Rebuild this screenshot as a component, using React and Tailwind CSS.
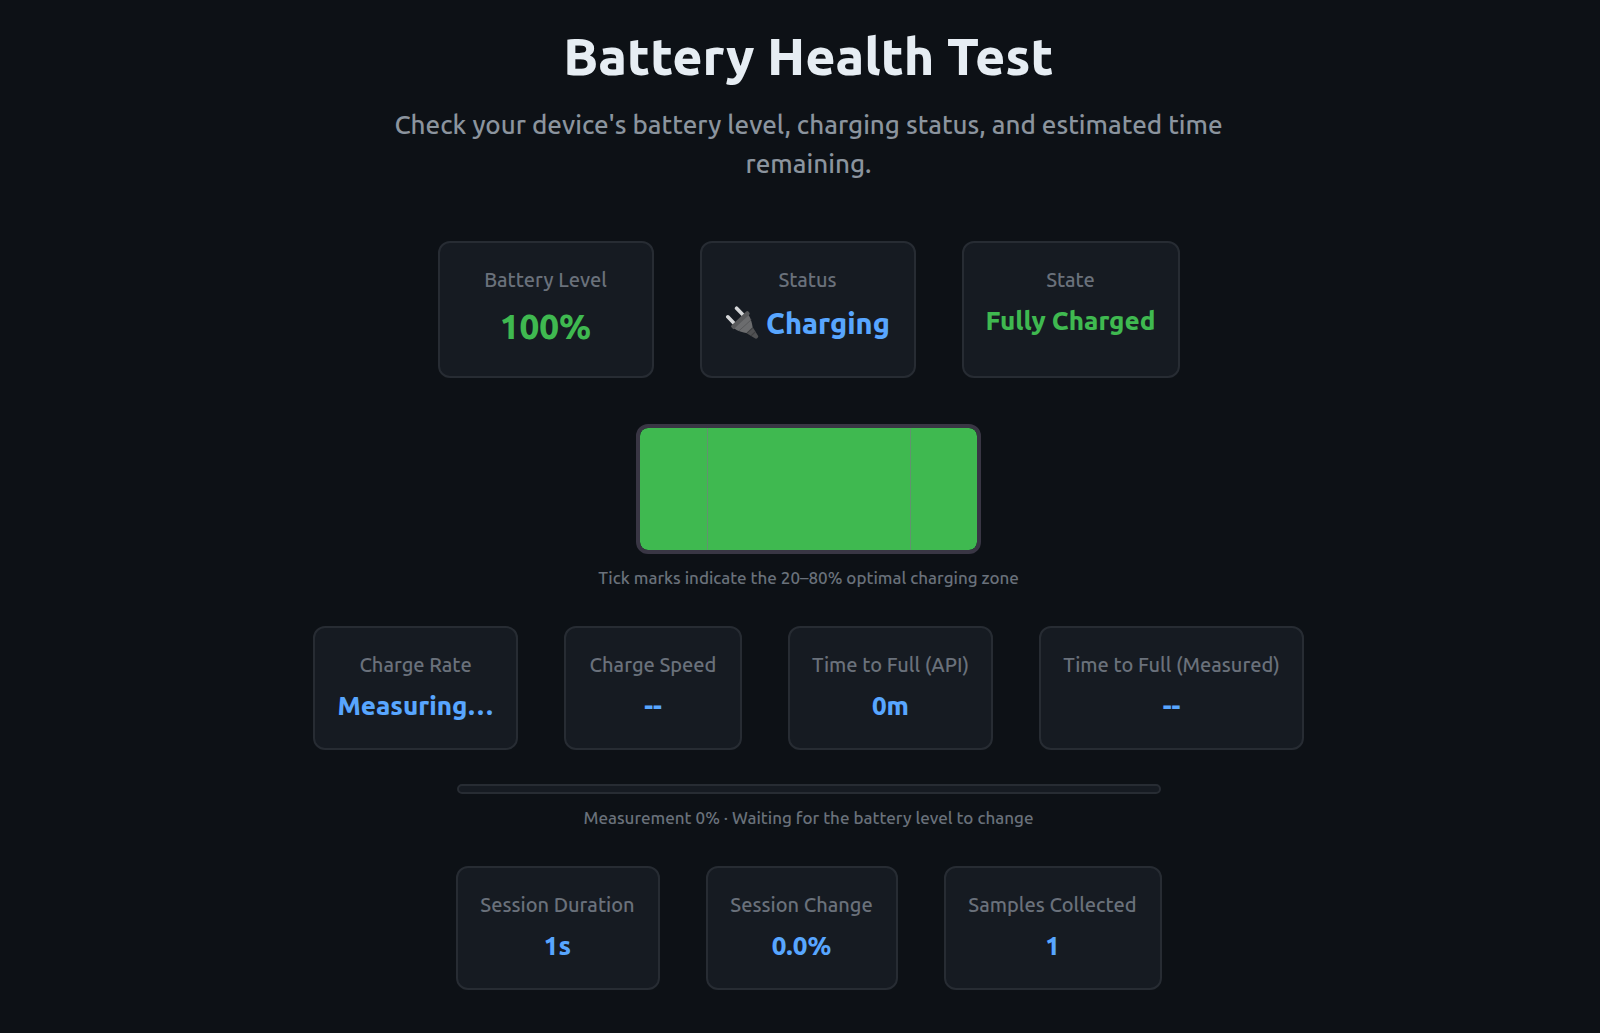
import clsx from 'clsx';

const levelStats = [
    { label: 'Battery Level', value: '100%', width: 'min-w-54', color: 'text-[#3fb950]', size: 'text-[35px] leading-[50px] mb-[3px]' },
    { label: 'Status', value: 'Charging', width: 'min-w-54', color: 'text-[#58a6ff]', size: 'text-[29px] leading-[44px]', plug: true },
    { label: 'State', value: 'Fully Charged', width: 'min-w-[218px]', color: 'text-[#3fb950]', size: 'text-[26px] leading-[40px]' },
];

const chargeStats = [
    { label: 'Charge Rate', value: 'Measuring…', width: 'min-w-[205px]' },
    { label: 'Charge Speed', value: '--', width: 'min-w-[178px]' },
    { label: 'Time to Full (API)', value: '0m', width: 'min-w-[205px]' },
    { label: 'Time to Full (Measured)', value: '--', width: 'min-w-[265px]' },
];

const sessionStats = [
    { label: 'Session Duration', value: '1s', width: 'min-w-[204px]' },
    { label: 'Session Change', value: '0.0%', width: 'min-w-[192px]' },
    { label: 'Samples Collected', value: '1', width: 'min-w-[218px]' },
];

const PlugIcon = () => (
    <svg viewBox="0 0 34 34" className="w-[34px] h-[34px] shrink-0" aria-hidden="true">
        <path d="M2.8 10.8 9 17.2M11.6 2.2l6.8 7" stroke="#d5d7d9" strokeWidth="3.6" strokeLinecap="round" fill="none" />
        <path d="M6.4 19.6 21.2 5.6c.8-.7 1.8-.7 2.4.1l.8 1c.5.7.4 1.4-.2 2L9.8 22.6c-.7.7-1.6.7-2.2 0l-1.2-1.3c-.5-.6-.5-1.2 0-1.7Z" fill="#58595b" />
        <path d="M9.2 22.4 23.6 9c2.6 4 3.4 8.2 4.2 13l-5.6 5.2C17.6 26 12.6 25.4 9.2 22.4Z" fill="#6b6c6e" />
        <path d="m21.6 27.2 6.2-5.9 5.4 8.6c.6 1.2-1.6 3.3-2.9 2.6Z" fill="#505153" />
        <path d="M22 27.2l5.8-5.6M26 29.8l4.2-4" stroke="#3f4042" strokeWidth="1.1" fill="none" />
        <path d="m14 24.8 12.2-11" stroke="#58595b" strokeWidth="1" fill="none" />
    </svg>
);

const StatCard = ({ label, value, width, color = 'text-[#58a6ff]', size = 'text-[26px] leading-[40px]', plug }) => (
    <div className={clsx('rounded-xl border-2 border-[#272c33] bg-[#161b22] px-5 py-[22px] text-center whitespace-nowrap', width)}>
        <p className="text-xl leading-[30px] font-medium text-[#6a717b] mb-1.5">{label}</p>
        <p className={clsx('flex items-center justify-center gap-[7px] font-extrabold', size, color)}>
            {plug && <PlugIcon />}
            {value}
        </p>
    </div>
);

const StatRow = ({ stats }) => (
    <div className="flex flex-wrap justify-center gap-[46px]">
        {stats.map((stat) => (
            <StatCard key={stat.label} {...stat} />
        ))}
    </div>
);

const BatteryGauge = ({ level }) => (
    <div className="relative w-[345px] h-[130px] max-w-full rounded-xl border-4 border-[#393644] bg-[#161b22] overflow-hidden">
        <div className="h-full rounded-lg bg-[#3fb950]" style={{ width: `${level}%` }} />
        <span className="absolute inset-y-0 left-1/5 w-px bg-[#61936e]" />
        <span className="absolute inset-y-0 left-4/5 w-px bg-[#61936e]" />
    </div>
);

const MeasurementBar = ({ progress }) => (
    <div
        role="progressbar"
        aria-label="Measurement"
        aria-valuenow={progress}
        aria-valuemin={0}
        aria-valuemax={100}
        className="w-[704px] max-w-full h-[10px] rounded-full border-2 border-[#272c33] bg-[#161b22] overflow-hidden"
    >
        <div className="h-full bg-[#58a6ff]" style={{ width: `${progress}%` }} />
    </div>
);

const App = () => (
    <main className="min-h-screen bg-[#0d1116] pt-6 pb-10 pl-[17px] flex flex-col items-center font-['Ubuntu','Noto_Sans',sans-serif]">
        {/* Header */}
        <header className="max-w-[860px] text-center mb-[58px]">
            <h1 className="text-[52px] leading-[64px] font-extrabold text-[#e6edf3]">Battery Health Test</h1>
            <p className="text-[26px] leading-[39px] font-medium text-[#8b949e] mt-[17px]">
                Check your device's battery level, charging status, and estimated time remaining.
            </p>
        </header>

        <StatRow stats={levelStats} />

        {/* Battery */}
        <div className="flex flex-col items-center mt-[46px] mb-[34px]">
            <BatteryGauge level={100} />
            <p className="text-[17px] leading-7 font-medium text-[#6a717b] mt-[10px]">Tick marks indicate the 20–80% optimal charging zone</p>
        </div>

        <StatRow stats={chargeStats} />

        {/* Measurement progress */}
        <div className="w-full flex flex-col items-center mt-[34px] mb-[34px]">
            <MeasurementBar progress={0} />
            <p className="text-[17px] leading-7 font-medium text-[#6a717b] mt-[10px]">Measurement 0% · Waiting for the battery level to change</p>
        </div>

        <StatRow stats={sessionStats} />
    </main>
);

export default App;
